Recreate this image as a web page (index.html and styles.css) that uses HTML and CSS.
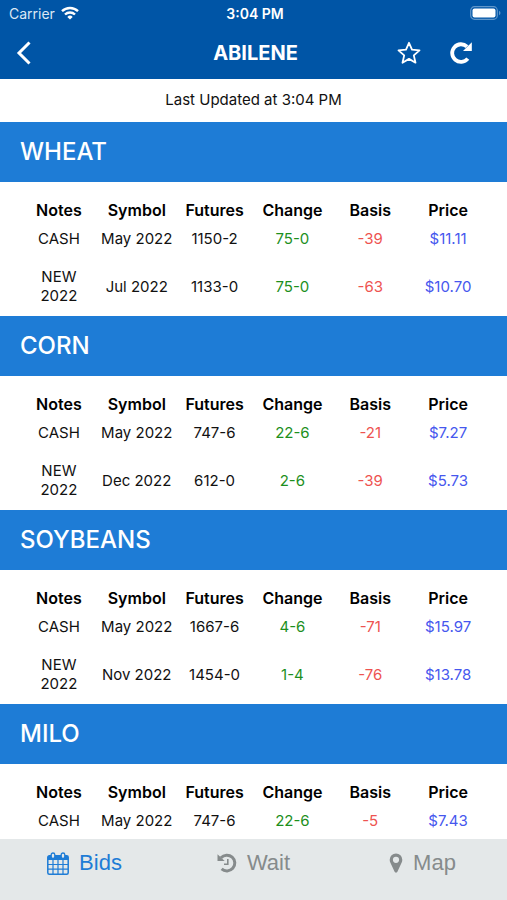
FILE: index.html
```html
<!DOCTYPE html>
<html lang="en">
<head>
    <meta charset="UTF-8">
    <meta name="viewport" content="width=device-width, initial-scale=1.0">
    <title>Abilene</title>
    <link rel="stylesheet" href="styles.css">
</head>
<body>
    <header class="header">
        <div class="status-bar">
            <div class="carrier">
                <span>Carrier</span>
                <svg width="18" height="14" viewBox="0 0 18 14" fill="none" stroke="#fff" stroke-width="2.4">
                    <path d="M1 5.2a11.5 11.5 0 0 1 16 0"/>
                    <path d="M4 8.5a7.2 7.2 0 0 1 10 0"/>
                    <path d="M9 13.6L6.3 10.9a3.9 3.9 0 0 1 5.4 0z" fill="#fff" stroke="none"/>
                </svg>
            </div>
            <span class="time">3:04 PM</span>
            <svg class="battery" width="31" height="14" viewBox="0 0 31 14">
                <rect x="0.7" y="0.7" width="26.6" height="12.6" rx="3.8" fill="none" stroke="#6096ca" stroke-width="1.2"/>
                <rect x="2.5" y="2.5" width="23" height="9" rx="2" fill="#fff"/>
                <path d="M29 4.8c2 .8 2 3.6 0 4.4z" fill="#6096ca"/>
            </svg>
        </div>
        <div class="nav-bar">
            <button type="button" class="icon-button" aria-label="Back">
                <svg width="16" height="24" viewBox="0 0 16 24" fill="none" stroke="#fff" stroke-width="3">
                    <path d="M13.5 1.5L3 12l10.5 10.5"/>
                </svg>
            </button>
            <h1>ABILENE</h1>
            <div class="nav-actions">
                <button type="button" class="icon-button" aria-label="Favorite">
                    <svg width="24" height="24" viewBox="0 0 24 24" fill="none" stroke="#fff" stroke-width="1.8" stroke-linejoin="round">
                        <path d="M12 1.8L15 8.7L22.5 9.4L16.8 14.4L18.5 21.7L12 17.9L5.5 21.7L7.2 14.4L1.5 9.4L9 8.7Z"/>
                    </svg>
                </button>
                <button type="button" class="icon-button" aria-label="Refresh">
                    <svg width="24" height="24" viewBox="0 0 24 24">
                        <path d="M18.8 17.6A8.8 8.8 0 1 1 18 5.6" fill="none" stroke="#fff" stroke-width="3.8"/>
                        <path d="M22.8 1.2V10H14z" fill="#fff"/>
                    </svg>
                </button>
            </div>
        </div>
    </header>

    <main class="content">
        <p class="updated">Last Updated at 3:04 PM</p>

        <section>
            <h2>WHEAT</h2>
            <div class="bids">
                <table>
                    <thead>
                        <tr><th>Notes</th><th>Symbol</th><th>Futures</th><th>Change</th><th>Basis</th><th>Price</th></tr>
                    </thead>
                    <tbody>
                        <tr><td>CASH</td><td>May 2022</td><td>1150-2</td><td class="change">75-0</td><td class="basis">-39</td><td class="price">$11.11</td></tr>
                        <tr><td>NEW<br>2022</td><td>Jul 2022</td><td>1133-0</td><td class="change">75-0</td><td class="basis">-63</td><td class="price">$10.70</td></tr>
                    </tbody>
                </table>
            </div>
        </section>

        <section>
            <h2>CORN</h2>
            <div class="bids">
                <table>
                    <thead>
                        <tr><th>Notes</th><th>Symbol</th><th>Futures</th><th>Change</th><th>Basis</th><th>Price</th></tr>
                    </thead>
                    <tbody>
                        <tr><td>CASH</td><td>May 2022</td><td>747-6</td><td class="change">22-6</td><td class="basis">-21</td><td class="price">$7.27</td></tr>
                        <tr><td>NEW<br>2022</td><td>Dec 2022</td><td>612-0</td><td class="change">2-6</td><td class="basis">-39</td><td class="price">$5.73</td></tr>
                    </tbody>
                </table>
            </div>
        </section>

        <section>
            <h2>SOYBEANS</h2>
            <div class="bids">
                <table>
                    <thead>
                        <tr><th>Notes</th><th>Symbol</th><th>Futures</th><th>Change</th><th>Basis</th><th>Price</th></tr>
                    </thead>
                    <tbody>
                        <tr><td>CASH</td><td>May 2022</td><td>1667-6</td><td class="change">4-6</td><td class="basis">-71</td><td class="price">$15.97</td></tr>
                        <tr><td>NEW<br>2022</td><td>Nov 2022</td><td>1454-0</td><td class="change">1-4</td><td class="basis">-76</td><td class="price">$13.78</td></tr>
                    </tbody>
                </table>
            </div>
        </section>

        <section>
            <h2>MILO</h2>
            <div class="bids">
                <table>
                    <thead>
                        <tr><th>Notes</th><th>Symbol</th><th>Futures</th><th>Change</th><th>Basis</th><th>Price</th></tr>
                    </thead>
                    <tbody>
                        <tr><td>CASH</td><td>May 2022</td><td>747-6</td><td class="change">22-6</td><td class="basis">-5</td><td class="price">$7.43</td></tr>
                    </tbody>
                </table>
            </div>
        </section>
    </main>

    <nav class="tab-bar">
        <a href="#bids" class="tab active">
            <svg width="22" height="23" viewBox="0 0 22 23">
                <rect x="0.8" y="3.8" width="20.4" height="18.4" rx="1.5" fill="none" stroke="currentColor" stroke-width="1.5"/>
                <path d="M1 4h20v4H1z" fill="currentColor"/>
                <path d="M1 12.5h20M1 17.2h20M6 8v14M11 8v14M16 8v14" stroke="currentColor" stroke-width="1.2"/>
                <rect x="4.2" y="1" width="3.6" height="5.5" rx="1.8" fill="#e4e8e9" stroke="currentColor" stroke-width="1.3"/>
                <rect x="14.2" y="1" width="3.6" height="5.5" rx="1.8" fill="#e4e8e9" stroke="currentColor" stroke-width="1.3"/>
            </svg>
            <span>Bids</span>
        </a>
        <a href="#wait" class="tab">
            <svg width="20" height="20" viewBox="0 0 20 20" fill="none" stroke="currentColor">
                <path d="M4 4.8A7.9 7.9 0 1 1 4.6 15.9" stroke-width="3"/>
                <path d="M0.5 1.2V8h7.2z" fill="currentColor" stroke="none"/>
                <path d="M10.8 6v5.2H7" stroke-width="1.6"/>
            </svg>
            <span>Wait</span>
        </a>
        <a href="#map" class="tab">
            <svg width="14" height="20" viewBox="0 0 14 20">
                <path d="M7 .5A6.300 6.300 0 0 0 .7 6.800c0 1 .2 1.800.6 2.600l4.300 9.300c.6 1.200 2.200 1.200 2.800 0l4.300-9.300c.4-.8.6-1.600.6-2.600A6.300 6.300 0 0 0 7 .5zM7 3.700a3.100 3.100 0 1 1 0 6.200 3.100 3.100 0 0 1 0-6.200z" fill="currentColor" fill-rule="evenodd"/>
            </svg>
            <span>Map</span>
        </a>
    </nav>
</body>
</html>
```

FILE: styles.css
```css
* {
    box-sizing: border-box;
}
body {
    margin: 0;
    height: 100vh;
    display: flex;
    flex-direction: column;
    font-family: Inter, sans-serif;
    font-size: 15px;
    color: #111;
    background-color: #fff;
}
svg {
    display: block;
}
.header {
    flex: none;
    background-color: #0055a6;
    color: #fff;
}
.status-bar {
    display: grid;
    grid-template-columns: 1fr auto 1fr;
    align-items: center;
    height: 26px;
    padding: 0 6px 0 9px;
    font-size: 14px;
}
.carrier {
    display: flex;
    align-items: center;
    gap: 6px;
    color: #dce8f4;
}
.time {
    font-weight: 600;
}
.battery {
    justify-self: end;
}
.nav-bar {
    display: grid;
    grid-template-columns: 1fr auto 1fr;
    align-items: center;
    height: 53px;
    padding: 0 12px 0 16px;
}
h1 {
    margin: 0;
    font-size: 20px;
    font-weight: 700;
    line-height: 24px;
}
.nav-actions {
    display: flex;
    justify-content: flex-end;
    gap: 28px;
    padding-right: 22px;
}
.icon-button {
    justify-self: start;
    padding: 0;
    border: none;
    background: none;
    cursor: pointer;
}
.content {
    flex: 1;
    min-height: 0;
    overflow-y: auto;
    scrollbar-width: none;
}
.updated {
    margin: 0;
    padding: 11px 0 12px;
    font-size: 15px;
    line-height: 20px;
    text-align: center;
}
h2 {
    margin: 0;
    padding: 16px 20px;
    background-color: #1e7cd6;
    color: #fff;
    font-size: 24px;
    font-weight: 500;
    line-height: 28px;
}
.bids {
    padding: 19px 20px 1px;
}
table {
    width: 100%;
    table-layout: fixed;
    border-collapse: collapse;
    text-align: center;
}
th {
    padding: 0;
    font-size: 16px;
    font-weight: 600;
    line-height: 19px;
    color: #000;
}
td {
    padding: 9px 0 10px;
    line-height: 19px;
    white-space: nowrap;
}
.change {
    color: #1d8f1d;
}
.basis {
    color: #ee5350;
}
.price {
    color: #4657ee;
}
.tab-bar {
    flex: none;
    display: flex;
    height: 61px;
    padding-top: 11px;
    background-color: #e4e8e9;
}
.tab {
    flex: 1;
    display: flex;
    justify-content: center;
    align-items: center;
    gap: 10px;
    height: 26px;
    font-family: "Liberation Sans", Arial, sans-serif;
    font-size: 22px;
    color: #868b8c;
    text-decoration: none;
}
.tab.active {
    color: #1e7cd6;
}
```
